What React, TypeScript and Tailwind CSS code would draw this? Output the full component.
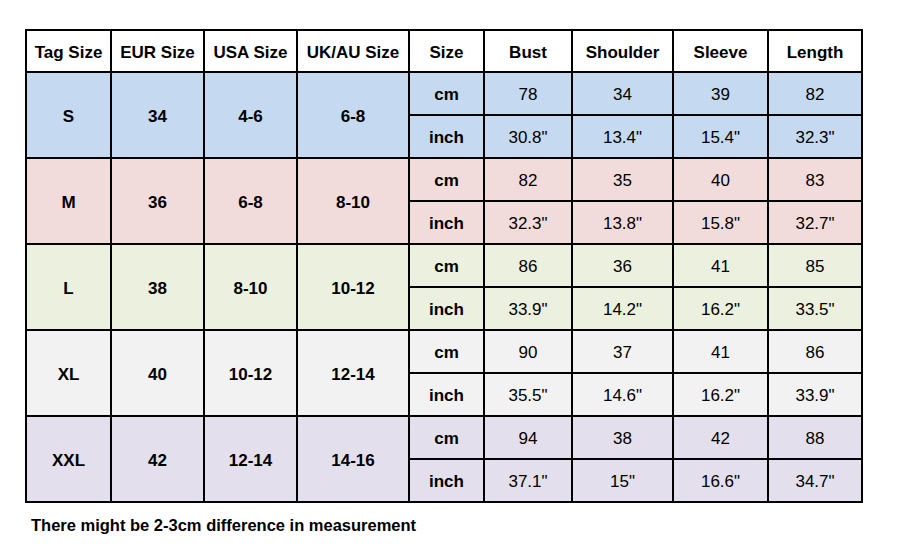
const groups = [
  { tag: "S", eur: "34", usa: "4-6", uk: "6-8", bg: "bg-[#c5d9f1]", cm: ["78", "34", "39", "82"], inch: ['30.8"', '13.4"', '15.4"', '32.3"'] },
  { tag: "M", eur: "36", usa: "6-8", uk: "8-10", bg: "bg-[#f2dcdb]", cm: ["82", "35", "40", "83"], inch: ['32.3"', '13.8"', '15.8"', '32.7"'] },
  { tag: "L", eur: "38", usa: "8-10", uk: "10-12", bg: "bg-[#ebf1de]", cm: ["86", "36", "41", "85"], inch: ['33.9"', '14.2"', '16.2"', '33.5"'] },
  { tag: "XL", eur: "40", usa: "10-12", uk: "12-14", bg: "bg-[#f2f2f2]", cm: ["90", "37", "41", "86"], inch: ['35.5"', '14.6"', '16.2"', '33.9"'] },
  { tag: "XXL", eur: "42", usa: "12-14", uk: "14-16", bg: "bg-[#e4dfec]", cm: ["94", "38", "42", "88"], inch: ['37.1"', '15"', '16.6"', '34.7"'] },
];

const headers = ["Tag Size", "EUR Size", "USA Size", "UK/AU Size", "Size", "Bust", "Shoulder", "Sleeve", "Length"];
const widths = [85, 93, 93, 112, 75, 88, 101, 95, 94];

const cell = "border-2 border-black px-0 pb-0 pt-[3px] text-center align-middle";

export default function App() {
  return (
    <div className="min-h-[554px] w-[897px] bg-white font-['Liberation_Sans',Arial,sans-serif] text-[17px] leading-5 text-black">
      <div className="pl-[25px] pt-[29px]">
        <table className="table-fixed border-collapse">
          <colgroup>
            {widths.map((w, i) => (
              <col key={i} style={{ width: w }} />
            ))}
          </colgroup>
          <thead>
            <tr className="h-[42px]">
              {headers.map((h) => (
                <th key={h} className={`${cell} font-bold whitespace-nowrap`}>
                  {h}
                </th>
              ))}
            </tr>
          </thead>
          <tbody>
            {groups.map((g) => (
              <>
                <tr key={g.tag + "cm"} className={`h-[43px] ${g.bg}`}>
                  <td rowSpan={2} className={`${cell} font-bold`}>{g.tag}</td>
                  <td rowSpan={2} className={`${cell} font-bold`}>{g.eur}</td>
                  <td rowSpan={2} className={`${cell} font-bold`}>{g.usa}</td>
                  <td rowSpan={2} className={`${cell} font-bold`}>{g.uk}</td>
                  <td className={`${cell} font-bold`}>cm</td>
                  {g.cm.map((v, i) => (
                    <td key={i} className={cell}>{v}</td>
                  ))}
                </tr>
                <tr key={g.tag + "inch"} className={`h-[43px] ${g.bg}`}>
                  <td className={`${cell} font-bold`}>inch</td>
                  {g.inch.map((v, i) => (
                    <td key={i} className={cell}>{v}</td>
                  ))}
                </tr>
              </>
            ))}
          </tbody>
        </table>
        <p className="mt-[12px] pl-[6px] text-[16.5px] font-bold">There might be 2-3cm difference in measurement</p>
      </div>
    </div>
  );
}
